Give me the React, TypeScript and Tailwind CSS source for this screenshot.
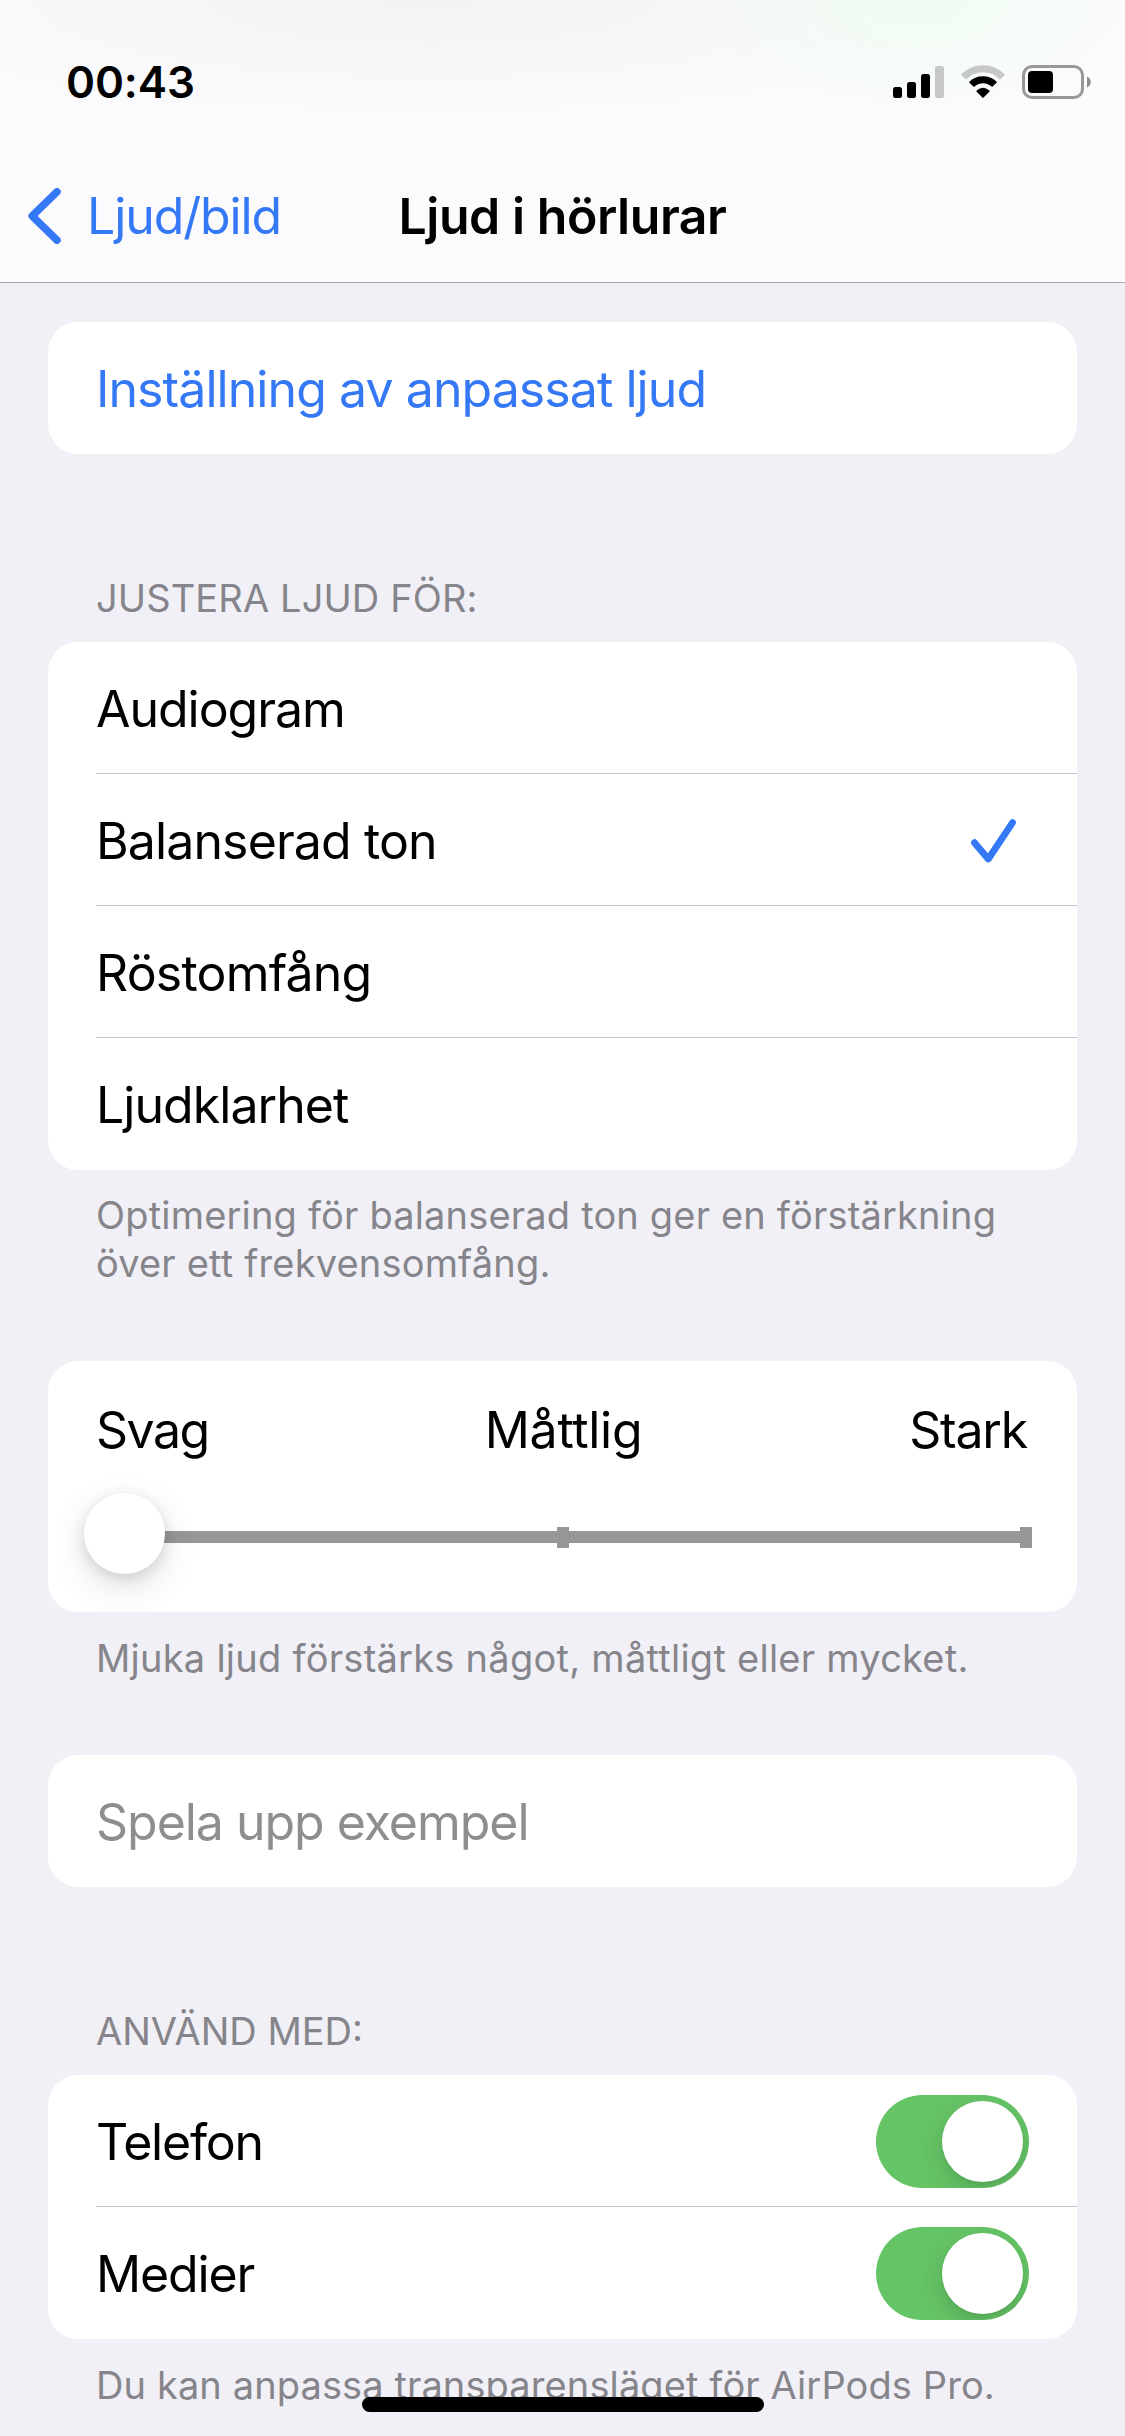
import React from "react";

function SignalBars() {
  return (
    <svg width="51" height="34" viewBox="0 0 51 34">
      <rect x="0" y="22" width="9" height="11" rx="2.5" />
      <rect x="14" y="17" width="9" height="16" rx="2.5" />
      <rect x="28" y="9" width="9" height="24" rx="2.5" />
      <rect x="42" y="1" width="9" height="32" rx="2.5" fill="#c6c7c7" />
    </svg>
  );
}

function WifiIcon() {
  return (
    <svg width="46" height="34" viewBox="0 0 46 34" fill="none" strokeWidth="7">
      <path d="M3.5 12.2A26.5 26.5 0 0 1 42.5 12.2" stroke="#c6c7c7" />
      <path d="M11.4 19.6A16.2 16.2 0 0 1 34.6 19.6" stroke="#000" />
      <path d="M23 32L17.2 26.2Q23 21 28.8 26.2Z" fill="#000" stroke="#000" strokeWidth="1.6" strokeLinejoin="round" />
    </svg>
  );
}

function BatteryIcon() {
  return (
    <svg width="70" height="34" viewBox="0 0 70 34">
      <rect x="1.5" y="1.5" width="59" height="31" rx="8.5" fill="none" stroke="#989898" strokeWidth="3" />
      <rect x="6" y="6" width="25" height="22" rx="4" />
      <path d="M65 11.5C70 13.5 70 20.5 65 22.5Z" fill="#8e8e8e" />
    </svg>
  );
}

function Header() {
  return (
    <header className="h-[283px] border-b border-[#a8a8ab] bg-[radial-gradient(ellipse_240px_120px_at_915px_0px,#f0fcf2,transparent),radial-gradient(ellipse_620px_120px_at_430px_0px,#f3f3f4,transparent)] bg-[#fbfbfd]">
      <div className="flex h-[164px] items-center justify-between pr-[33px] pl-[66px]">
        <span className="text-[44px] leading-[48px] font-semibold tracking-[-0.1px]">00:43</span>
        <div className="flex items-center gap-4">
          <SignalBars />
          <WifiIcon />
          <BatteryIcon />
        </div>
      </div>
      <nav className="grid h-[104px] grid-cols-[1fr_auto_1fr] items-center text-[50px] leading-[60px]">
        <a className="flex items-center gap-[26px] pl-7 text-[#3478f6]">
          <svg width="33" height="56" viewBox="0 0 33 56" fill="none" stroke="currentColor" strokeWidth="7.5" strokeLinecap="round" strokeLinejoin="round">
            <path d="M29 3.8L4.2 28L29 52.2" />
          </svg>
          <span className="tracking-[-1.1px]">Ljud/bild</span>
        </a>
        <h1 className="font-semibold tracking-[-0.45px]">Ljud i hörlurar</h1>
      </nav>
    </header>
  );
}

function Card({ children, className = "" }: { children: React.ReactNode; className?: string }) {
  return <div className={`mx-12 overflow-hidden rounded-[30px] bg-white ${className}`}>{children}</div>;
}

function Row({ label, tone = "", last = false, children }: { label: string; tone?: string; last?: boolean; children?: React.ReactNode }) {
  return (
    <div className={`ml-12 flex h-[132px] items-center justify-between text-[50px] leading-[60px] ${last ? "pt-0.5" : "border-b border-[#c6c6c8] pt-[3px]"}`}>
      <span className={tone || "tracking-[-1.04px]"}>{label}</span>
      {children}
    </div>
  );
}

function SectionTitle({ children, className }: { children: React.ReactNode; className: string }) {
  return <h2 className={`mt-[120px] mb-5 ml-24 text-[38px] leading-[48px] text-[#85858b] ${className}`}>{children}</h2>;
}

function Footnote({ children, className }: { children: React.ReactNode; className: string }) {
  return <p className={`ml-24 text-[38px] leading-[48px] whitespace-nowrap text-[#85858b] ${className}`}>{children}</p>;
}

function Toggle() {
  return (
    <div className="mr-12 mb-px flex h-[93px] w-[153px] justify-end overflow-hidden rounded-full bg-[#65c466] p-1.5">
      <div className="size-[81px] rounded-full bg-white shadow-[0_9px_24px_rgba(0,0,0,0.14),0_3px_3px_rgba(0,0,0,0.04)]" />
    </div>
  );
}

function Checkmark() {
  return (
    <svg className="mr-[61px]" width="45" height="44" viewBox="0 0 45 44" fill="none" stroke="#3478f6" strokeWidth="6.8" strokeLinecap="round" strokeLinejoin="round">
      <path d="M3.5 23.7L17.3 40L41.5 3.6" />
    </svg>
  );
}

function StrengthSlider() {
  return (
    <div className="relative mt-[33px] ml-9 h-[81px] w-[948px]">
      <div className="absolute top-[38px] right-0 left-6 h-3 bg-[#979797]" />
      <div className="absolute top-[34px] left-[473px] h-[21px] w-3 bg-[#979797]" />
      <div className="absolute top-[34px] right-0 h-[21px] w-3 bg-[#979797]" />
      <div className="absolute top-0 left-0 size-[81px] rounded-full bg-white shadow-[0_12px_36px_rgba(0,0,0,0.12),0_4px_14px_rgba(0,0,0,0.12)]" />
    </div>
  );
}

export default function App() {
  return (
    <main className="relative h-[2436px] w-[1125px] overflow-hidden bg-[#f1f0f6] font-['Inter',sans-serif] text-black">
      <Header />
      <Card className="mt-[39px]">
        <Row label="Inställning av anpassat ljud" tone="text-[#3478f6] tracking-[-0.93px]" last />
      </Card>

      <SectionTitle className="tracking-[0.12px]">JUSTERA LJUD FÖR:</SectionTitle>
      <Card>
        <Row label="Audiogram" />
        <Row label="Balanserad ton" tone="tracking-[-0.88px]">
          <Checkmark />
        </Row>
        <Row label="Röstomfång" tone="tracking-[-0.8px]" />
        <Row label="Ljudklarhet" tone="tracking-[-0.95px]" last />
      </Card>
      <Footnote className="mt-[21px] tracking-[0.18px]">
        Optimering för balanserad ton ger en förstärkning
        <br />
        över ett frekvensomfång.
      </Footnote>

      <Card className="mt-[74px] h-[251px] pt-[39px]">
        <div className="mx-12 grid grid-cols-3 text-[50px] leading-[60px]">
          <span className="tracking-[-1.5px]">Svag</span>
          <span className="pl-0.5 text-center tracking-[-0.3px]">Måttlig</span>
          <span className="pr-0.5 text-right tracking-[-1.2px]">Stark</span>
        </div>
        <StrengthSlider />
      </Card>
      <Footnote className="mt-[22px] tracking-[0.255px]">Mjuka ljud förstärks något, måttligt eller mycket.</Footnote>

      <Card className="mt-[73px]">
        <Row label="Spela upp exempel" tone="text-[#8e8e8e] tracking-[-1.03px]" last />
      </Card>

      <SectionTitle className="tracking-normal">ANVÄND MED:</SectionTitle>
      <Card>
        <Row label="Telefon" tone="tracking-[-1.2px]">
          <Toggle />
        </Row>
        <Row label="Medier" tone="tracking-[-1.15px]" last>
          <Toggle />
        </Row>
      </Card>
      <Footnote className="mt-[22px] tracking-[0.11px]">Du kan anpassa transparensläget för AirPods Pro.</Footnote>

      <div className="absolute top-[2397px] left-[362px] h-[15px] w-[402px] rounded-full bg-black" />
    </main>
  );
}
